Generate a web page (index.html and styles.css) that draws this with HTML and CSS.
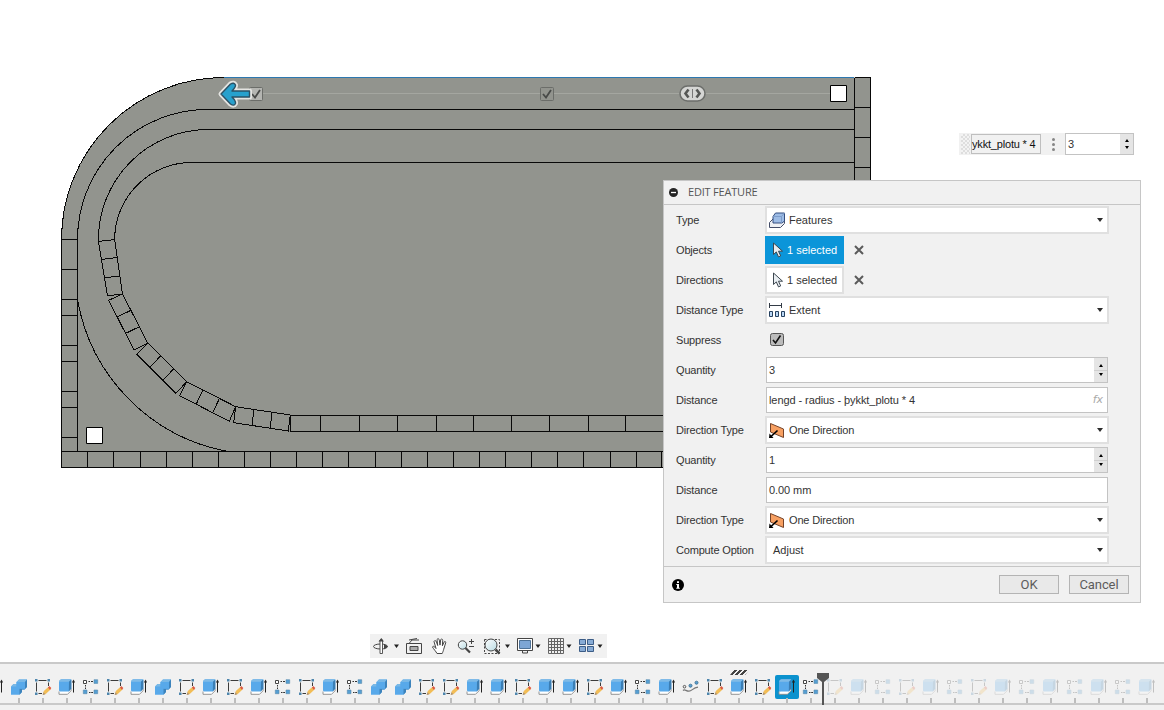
FILE: index.html
```html
<!DOCTYPE html>
<html lang="en">
<head>
<meta charset="utf-8">
<title>Edit Feature</title>
<link rel="stylesheet" href="styles.css">
</head>
<body>
<svg class="defs" width="0" height="0" aria-hidden="true">
  <defs>
    <linearGradient id="lens" x1="0" y1="0" x2="1" y2="1"><stop offset="0" stop-color="#fff"/><stop offset="1" stop-color="#b9dbe2"/></linearGradient>
    <symbol id="extrude" viewBox="0 0 18 18">
      <path d="M1 13.500v2.800h8.500l3.500-3.500v-2" fill="#fff" stroke="#8a8a8a" stroke-width=".9"/>
      <path d="M1 3.500Q1.500 1.500 3.500 1.200H12.500Q13.300 1.300 13.300 2v8.500l-2.500 3H1.800L1 12.500z" fill="#58a9ea"/>
      <path d="M1 3.700Q1.500 1.500 3.500 1.200H12.500Q13.300 1.300 13.300 1.600L11 3.700z" fill="#80bbe6"/>
      <path d="M11 3.700l2.300-2.200v9l-2.500 3z" fill="#3b7eb4"/>
      <path d="M15.500 14.500V3" stroke="#222" fill="none"/><path d="M13.900 4.500l1.600-3 1.600 3z" fill="#222"/>
    </symbol>
    <symbol id="combine" viewBox="0 0 18 18">
      <path d="M1 8.500L3.500 6H6.500V4L9 1.500H17V9l-2.500 2.500H12V14l-2.500 2.700H1z" fill="#58a9ea"/>
      <path d="M1 8.500L3.500 6H6.500v2.500zM6.500 4L9 1.500H17L15 4z" fill="#79b8e6"/>
      <path d="M15 4l2-2.500V9l-2.500 2.500H12V14l-2.500 2.700v-6H15z" fill="#3d83bb"/>
      <path d="M6.500 4H15v6.500H9.500V8.500h-3z" fill="#58a9ea"/>
    </symbol>
    <symbol id="sketch" viewBox="0 0 18 18">
      <path d="M4.500 2.500h8M2.500 4.500v9M14.500 4.500V8M4.500 15.500H8" stroke="#3c3c3c" fill="none"/>
      <path d="M1 1h2.500v2.500H1zM13.500 1H16v2.500h-2.500zM1 14.500h2.500V17H1z" fill="#4e86ad"/>
      <path d="M8.700 17l1.100-4 4.500-4 2.200 2.500-4.700 4.500z" fill="#f2bd57"/>
      <path d="M14 9.500L15.300 8l2 2-1.300 2z" fill="#dd593f"/><path d="M8.700 17l.8-2.700 1.800 1.900z" fill="#a8907a"/>
    </symbol>
    <symbol id="pattern" viewBox="0 0 18 18">
      <path d="M1.500 2.500h3v3h-3z" fill="#fff" stroke="#444"/>
      <path d="M6.500 3.500H8m1 0h2M3.500 7v1.500m0 1V11M7 14.500h1.500m.7 0H11" stroke="#333" fill="none"/>
      <path d="M12 1.700h3.700v3.700H12zM1.300 12H5v3.700H1.300zM12 12h3.700v3.700H12z" fill="#559fd3" stroke="#5b8cad" stroke-width=".6"/>
    </symbol>
    <symbol id="path" viewBox="0 0 18 18">
      <path d="M1 12.500c2-2 3 1 6 .7 3-.2 4-3.500 9-4" fill="none" stroke="#777" stroke-width="1.200"/>
      <circle cx="2.500" cy="8.700" r="1.300" fill="#eee" stroke="#555"/>
      <circle cx="8.500" cy="7.700" r="1.500" fill="#559fd3" stroke="#47799b"/><circle cx="14.500" cy="4.700" r="1.500" fill="#559fd3" stroke="#47799b"/>
    </symbol>
    <symbol id="plane" viewBox="0 0 16 16">
      <path d="M1.500 1.500L14.500 7v8.500L1.500 10z" fill="#f7a062" stroke="#754329"/>
      <path d="M2 14.500L8.500 8.500" stroke="#000" stroke-width="1.700"/><path d="M0 16l.5-4.500L4.500 16z" fill="#000"/>
    </symbol>
    <symbol id="pointer" viewBox="0 0 12 16">
      <path d="M1.500 1v11.500l2.800-2.600 2.200 5 2.200-1-2.200-4.700h4z" fill="#e8edf1" stroke="#3d4750"/>
    </symbol>
    <symbol id="tick" viewBox="0 0 14 14">
      <rect x=".5" y=".5" width="13" height="12" rx="2" fill="#bbb" stroke="#555"/>
      <path d="M3 7L5.500 10 10.500 2.500" fill="none" stroke="#111" stroke-width="1.600"/>
    </symbol>
  </defs>
</svg>

<main class="viewport">
  <svg class="model" width="1164" height="620" viewBox="0 0 1164 620">
    <path d="M61.500 467.500V239.500A162.500 162 0 0 1 224 77.500H870.500V467.500z" fill="#92948e"/>
    <g class="edges">
      <path d="M224 77.500A162.500 162 0 0 0 61.500 239.500V467.500H700"/>
      <path d="M854.500 109.500H208A130 130 0 0 0 77.500 239.500V451.500"/>
      <path d="M61.500 451.500H700"/>
      <path d="M854.500 129.500H208A110 110 0 0 0 98.500 241.500"/>
      <path d="M854.500 162.500H192A77 77 0 0 0 114.700 239.500"/>
      <path d="M77.500 299.500A187 187 0 0 0 228 451.500"/>
      <path d="M61.500 239.500h16M61.500 269.500h16M61.500 299.500h16M61.500 315.500h16M61.500 345.500h16M61.500 361.500h16M61.500 391.500h16M61.500 407.500h16M61.500 437.500h16"/>
      <path d="M87.500 451.500v16M113.500 451.500v16M140.500 451.500v16M166.500 451.500v16M192.500 451.500v16M218.500 451.500v16M244.500 451.500v16M270.500 451.500v16M296.500 451.500v16M322.500 451.500v16M348.500 451.500v16M375.500 451.500v16M401.500 451.500v16M427.500 451.500v16M453.500 451.500v16M479.500 451.500v16M505.500 451.500v16M531.500 451.500v16M557.500 451.500v16M583.500 451.500v16M610.500 451.500v16M636.500 451.500v16M661.500 451.500v16"/>
      <path d="M98.500 241.500L114.700 239.500 122.500 294 107.500 295.700zM101.500 259.500L117.500 257.500M104.500 277.700L120 276"/>
      <path d="M122.500 294L108.700 300.300 134 350 147.700 343zM117.100 316.900L131 310.300M125.600 333.400L139.300 326.700"/>
      <path d="M147.700 343L136.700 354.300 176 393.300 186.700 381.700zM149.800 367.300L160.700 355.900M162.900 380.300L173.700 368.800"/>
      <path d="M186.700 381.700L179.700 395.700 229.300 421.300 235.700 406.700zM196.200 404.200L203 390M212.800 412.800L219.400 398.400"/>
      <path d="M235.700 406.700L233.700 422.700 288.300 431 290.300 415zM251.900 425.500L253.900 409.500M270.100 428.200L272.100 412.200"/>
      <path d="M700 415.500H290.500v16H700M320.500 415.500v16M359.500 415.500v16M397.500 415.500v16M436.500 415.500v16M473.500 415.500v16M511.500 415.500v16M549.500 415.500v16M588.500 415.500v16M625.500 415.500v16"/>
      <path d="M854.500 77.500V200M854.500 77.500h16V200M854.500 107.500h16M854.500 137.500h16M854.500 167.500h16"/>
    </g>
    <path d="M224 77.500H854" fill="none" stroke="#2d78b0"/>
    <path d="M250 93.500H830" stroke="#a4a6a0"/>
    <g fill="#fff" stroke="#000"><path d="M86.500 427.500h16v16h-16zM830.500 85.500h16v16h-16z"/></g>
    <g fill="#92948e" stroke="#6b6d69"><rect x="540.500" y="87.500" width="13" height="13" rx="1"/><rect x="249.500" y="87.500" width="13" height="13" rx="1" fill="#b4b5b1"/></g>
    <path d="M543 94l3 3.500 5-7.500M252 94l3 3.500 5-7.500" fill="none" stroke="#484a48" stroke-width="1.800"/>
    <rect x="680" y="86" width="25" height="15" rx="7.500" fill="#d5d6d4" stroke="#6c6e6b" stroke-width="1.500"/>
    <path d="M688.500 89.500l-3 4 3 4M696.500 89.500l3 4-3 4" fill="none" stroke="#555755" stroke-width="2.600"/><path d="M692.500 89v9" stroke="#777"/>
    <path d="M221 94L230.500 84q3.500-2 5 1 .3 2-3.500 6H249.500V97H232q4 4 3.500 6.500-1.500 3-5 .5z" fill="#e4e4e1" stroke="#e4e4e1" stroke-width="5" stroke-linejoin="round"/>
    <path d="M221 94L230.500 84q3.500-2 5 1 .3 2-3.500 6H249.500V97H232q4 4 3.500 6.500-1.500 3-5 .5z" fill="#27a1cd" stroke="#2b5266" stroke-width="1.400" stroke-linejoin="round"/>
  </svg>

  <div class="floating">
    <span class="grip"></span>
    <span class="expression">ykkt_plotu * 4</span>
    <span class="more"><i></i><i></i><i></i></span>
    <span class="mini-input">3<span class="spin"><i class="up"></i><i class="down"></i></span></span>
  </div>

  <section class="dialog">
    <header class="dialog-title"><svg width="9" height="9"><circle cx="4.500" cy="4.500" r="4.500" fill="#252525"/><path d="M2 4.500h5" stroke="#fff" stroke-width="1.300"/></svg><span>EDIT FEATURE</span></header>
    <div class="rows">
      <div class="row"><label>Type</label><div class="combo"><svg width="16" height="16"><path d="M.5 10.500L4 7h11.500v4.500l-4 4H.5z" fill="#eef0f4" stroke="#444d68"/><path d="M4 4.500L6.500 1h9v8L13 11H4z" fill="#9dbce6" stroke="#354f80"/><path d="M4 4.500h8.500V11M12.500 4.500l3-3.500" stroke="#7d9dcb" fill="none"/></svg><span>Features</span><i class="caret"></i></div></div>
      <div class="row"><label>Objects</label><div class="pick active"><svg width="12" height="16"><use href="#pointer"/></svg><span>1 selected</span></div><svg class="clear" width="10" height="10"><path d="M1 1l8 8M9 1L1 9"/></svg></div>
      <div class="row"><label>Directions</label><div class="pick"><svg width="12" height="16"><use href="#pointer"/></svg><span>1 selected</span></div><svg class="clear" width="10" height="10"><path d="M1 1l8 8M9 1L1 9"/></svg></div>
      <div class="row"><label>Distance Type</label><div class="combo"><svg width="16" height="16"><path d="M.5 1v5M12.500 1v5M1 3.500h11" stroke="#333b46" fill="none"/><path d="M.5 9.500h3v5h-3zM6.500 9.500h3v5h-3zM12.500 9.500h3v5h-3z" fill="#b9d7f6" stroke="#26415f"/></svg><span>Extent</span><i class="caret"></i></div></div>
      <div class="row"><label>Suppress</label><svg class="check" width="14" height="14"><use href="#tick"/></svg></div>
      <div class="row"><label>Quantity</label><div class="input">3<span class="spin"><i class="up"></i><i class="down"></i></span></div></div>
      <div class="row"><label>Distance</label><div class="input">lengd - radius - þykkt_plotu * 4<em>fx</em></div></div>
      <div class="row"><label>Direction Type</label><div class="combo"><svg width="16" height="16"><use href="#plane"/></svg><span class="tight">One Direction</span><i class="caret"></i></div></div>
      <div class="row"><label>Quantity</label><div class="input">1<span class="spin"><i class="up"></i><i class="down"></i></span></div></div>
      <div class="row"><label>Distance</label><div class="input">0.00 mm</div></div>
      <div class="row"><label>Direction Type</label><div class="combo"><svg width="16" height="16"><use href="#plane"/></svg><span class="tight">One Direction</span><i class="caret"></i></div></div>
      <div class="row"><label>Compute Option</label><div class="combo plain"><span>Adjust</span><i class="caret"></i></div></div>
    </div>
    <footer class="dialog-foot">
      <svg width="12" height="12"><circle cx="6" cy="6" r="6" fill="#000"/><path d="M5 2.200h2v1.800H5zM4.300 5H7v3.700h.8v1H4.300v-1H5V6h-.7z" fill="#fff"/></svg>
      <button>OK</button><button>Cancel</button>
    </footer>
  </section>

  <nav class="navbar">
    <svg width="236" height="24" viewBox="370 634 236 24" fill="none" stroke="#454545">
      <ellipse cx="380.500" cy="646.500" rx="7" ry="2.500"/><path d="M380 640h2.500v13.500H380z" fill="#fff" stroke-width=".9"/><path d="M378.500 641.500l2.800-3.500 2.700 3.500zM384 644l4 2.500-4 3z" fill="#454545" stroke="none"/>
      <path d="M409 643.500l3-3.500h7M406.500 643.500h15v10h-15zM409 640l8-1.500"/><path d="M410 646.500h8v4h-8z" fill="#aaa"/>
      <path d="M437 653.500c-1-2-3.500-4.500-4.500-6.500.5-1.500 2-.5 3.500 1.500l-2-7c.5-1.500 2-1 2.500.5l1.200 3.500-.7-6c1-1.300 2-.8 2.300.6l.7 5 .7-5.500c1-1 2-.5 2 .7l-.3 5.500 1.800-4c1-.7 1.800 0 1.500 1l-2 6.500c-.5 2-1 3-1.500 4.200z" fill="#fff"/>
      <circle cx="462.500" cy="645" r="4.200" fill="url(#lens)"/><path d="M465.500 648l4.500 4.500" stroke-width="2.200"/><path d="M469 641.500h5M471.500 639v5M469 646.500h5"/>
      <path d="M484.500 639.500h15v14h-15z" stroke-dasharray="2 1.500"/><circle cx="491" cy="645" r="6" fill="url(#lens)"/><path d="M495.500 649.500l4 4" stroke-width="2.500"/>
      <path d="M517.500 638.500h15v12h-15z" fill="#fff"/><path d="M519.500 640.500h11v8h-11z" fill="#7da6d5" stroke="#4d7197"/><path d="M522.500 651v2h5v-2"/>
      <path d="M548.500 638.500h15v15h-15zM551.500 638v16M554.500 638v16M557.500 638v16M560.500 638v16M548 641.500h16M548 644.500h16M548 647.500h16M548 650.500h16" stroke="#666"/>
      <path d="M579.500 639.500h6v5h-6zM587.500 639.500h6v5h-6zM579.500 646.500h6v5h-6zM587.500 646.500h6v5h-6z" fill="#87abd5" stroke="#3c5d87"/>
      <path d="M394 644.500h5l-2.500 3.500zM505 644.500h5l-2.500 3.500zM535.500 644.500h5l-2.500 3.500zM566.500 644.500h5l-2.500 3.500zM597.500 644.500h5l-2.500 3.500z" fill="#222" stroke="none"/>
    </svg>
  </nav>
</main>

<div class="timeline"><div class="track" id="track"></div></div>
<script src="timeline.js"></script>
</body>
</html>
```
FILE: styles.css
```css
* { box-sizing: border-box; }
body { margin: 0; width: 1164px; height: 710px; overflow: hidden; display: flex; flex-direction: column; background: #fff; font: 11px "Liberation Sans", Arial, sans-serif; color: #333; }
.defs { position: absolute; }
.viewport { position: relative; height: 662px; flex: none; }
.model { display: block; }
.edges { fill: none; stroke: #080808; stroke-width: 1; shape-rendering: crispEdges; }

.floating { position: absolute; left: 959px; top: 133px; width: 175px; height: 22px; display: flex; align-items: center; background: #f1f1f1; }
.grip { width: 9px; height: 20px; margin: 0 1px 0 2px; background: repeating-conic-gradient(#dedede 0 25%, #f3f3f3 0 50%) 0 0 / 4px 4px; }
.expression { width: 70px; height: 20px; border: 1px solid #bfbfbf; line-height: 19px; color: #111; white-space: nowrap; letter-spacing: -.18px; }
.more { width: 24px; height: 22px; display: flex; flex-direction: column; align-items: center; justify-content: center; gap: 2px; }
.more i { width: 3px; height: 3px; border-radius: 2px; background: #858585; }
.mini-input { position: relative; flex: 1; height: 22px; border: 1px solid #c3c3c3; background: #fff; padding-left: 2px; line-height: 21px; }

.dialog { position: absolute; left: 663px; top: 180px; width: 478px; height: 423px; background: #f1f1f1; border: 1px solid #c6c6c6; }
.dialog-title { height: 24px; display: flex; align-items: center; gap: 10px; padding: 0 0 1px 5px; border-bottom: 1px solid #c6c6c6; font: 11px/20px "Open Sans", sans-serif; color: #555; }
.dialog-title span { letter-spacing: -.2px; white-space: nowrap; padding-bottom: 1px; }
.rows { height: 361px; display: flex; flex-direction: column; }
.row { height: 30px; display: flex; align-items: center; padding-left: 12px; }
.row label { width: 89px; flex: none; white-space: nowrap; letter-spacing: -.18px; }
.combo { width: 344px; height: 28px; border: 2px solid #e0e0e0; background: #fff; display: flex; align-items: center; gap: 4px; padding: 0 4px 0 2px; }
.combo.plain { padding-left: 6px; }
.tight { letter-spacing: -.15px; }
.caret { margin-left: auto; border: 3.500px solid transparent; border-top: 4px solid #2c2c2c; border-bottom: 0; }
.pick { width: 79px; height: 28px; border: 2px solid #e0e0e0; background: #fff; display: flex; align-items: center; gap: 3px; padding-left: 5px; white-space: nowrap; }
.pick.active { background: #0b95d9; border-color: #0b95d9; color: #fff; }
.clear { margin-left: 10px; fill: none; stroke: #5a5a5a; stroke-width: 2; }
.check { margin-left: 5px; }
.input { position: relative; width: 342px; height: 26px; margin-left: 1px; border: 1px solid #c3c3c3; background: #fff; padding-left: 2px; line-height: 25px; letter-spacing: -.08px; }
.input em { position: absolute; right: 4px; top: 0; color: #aaa; font: italic 11px/24px "DejaVu Sans", sans-serif; }
.spin { position: absolute; right: 0; top: 0; width: 13px; height: 100%; background: linear-gradient(#cfcfcf, #cfcfcf) 0 50% / 100% 1px no-repeat #e5e5e5; display: flex; flex-direction: column; align-items: center; justify-content: space-evenly; }
.mini-input .spin { background: #e5e5e5; }
.spin .up { border: 2.500px solid transparent; border-bottom: 3px solid #000; border-top: 0; }
.spin .down { border: 2.500px solid transparent; border-top: 3px solid #000; border-bottom: 0; }
.dialog-foot { height: 36px; border-top: 1px solid #c6c6c6; display: flex; align-items: center; padding: 0 11px 0 8px; gap: 10px; }
.dialog-foot svg { margin-right: auto; }
.dialog-foot button { width: 60px; height: 19px; padding: 0; border: 1px solid #b4b4b4; background: #e9e9e9; color: #5c5c5c; font: 13px/16px Roboto, sans-serif; letter-spacing: -.1px; }

.navbar { position: absolute; left: 370px; top: 634px; width: 237px; height: 24px; background: #f1f1f1; }
.navbar svg { display: block; }

.timeline { flex: 1; background: #f1f1f1; border-top: 2px solid #c9c9c9; }
.track { position: relative; height: 41px; border-bottom: 2px solid #c9c9c9; display: flex; margin-left: -17px; width: 1200px; }
.step { position: relative; width: 24px; flex: none; height: 39px; padding: 11px 0 0; }
.step svg { display: block; width: 24px; height: 24px; padding: 3px; }
.step::after { content: ""; display: block; width: 2px; height: 5px; margin: -1px auto 0; background: #bdbdbd; }
.step.selected svg { background: #0b92ce; border-radius: 2px; }
.step.future svg { opacity: .23; }
.step.warned::before { content: ""; position: absolute; left: 5px; top: 6px; width: 15px; height: 5px; background: repeating-linear-gradient(90deg, #444 0 3px, transparent 3px 5px); transform: skewX(-38deg); }
.marker { position: absolute; left: 833px; top: 9px; }
```
FILE: timeline.js
```js
const names = { E: "extrude", C: "combine", S: "sketch", P: "pattern", J: "path" };
const steps = "ECSEPSECSESEPSEPCCSSEESEESEPEJSESEPSEPSEPSEPEPEPE";
const track = document.getElementById("track");
track.innerHTML = [...steps].map((key, i) => {
  const state = i === 33 ? " selected" : i > 34 ? " future" : i === 31 ? " warned" : "";
  return `<div class="step${state}"><svg viewBox="0 0 18 18"><use href="#${names[key]}"/></svg></div>`;
}).join("") + '<svg class="marker" width="14" height="33"><path d="M1 0h12v5l-5 4v23H6V9L1 5z" fill="#555"/></svg>';
```
